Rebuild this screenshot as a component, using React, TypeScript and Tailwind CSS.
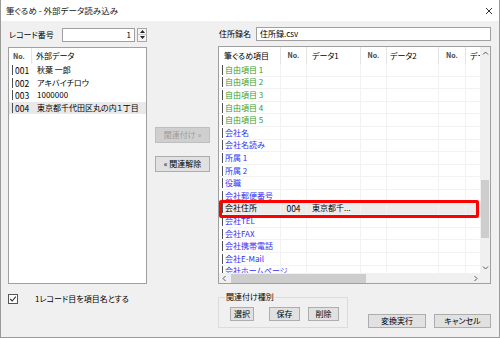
import React from 'react';

type Row = { label: string; c: 'g' | 'b' | 'k'; no?: string; data?: string; hl?: boolean };

const rows: Row[] = [
  { label: '自由項目 1', c: 'g' },
  { label: '自由項目 2', c: 'g' },
  { label: '自由項目 3', c: 'g' },
  { label: '自由項目 4', c: 'g' },
  { label: '自由項目 5', c: 'g' },
  { label: '会社名', c: 'b' },
  { label: '会社名読み', c: 'b' },
  { label: '所属 1', c: 'b' },
  { label: '所属 2', c: 'b' },
  { label: '役職', c: 'b' },
  { label: '会社郵便番号', c: 'b' },
  { label: '会社住所', c: 'k', no: '004', data: '東京都千...', hl: true },
  { label: '会社TEL', c: 'b' },
  { label: '会社FAX', c: 'b' },
  { label: '会社携帯電話', c: 'b' },
  { label: '会社E-Mail', c: 'b' },
  { label: '会社ホームページ', c: 'b' },
];

const colorCls = (c: Row['c']) =>
  c === 'g' ? 'text-[#2f9e2f]' : c === 'b' ? 'text-[#3030f5]' : 'text-black';

const leftRows = [
  { no: '001', v: '秋葉 一郎' },
  { no: '002', v: 'アキバイチロウ' },
  { no: '003', v: '1000000' },
  { no: '004', v: '東京都千代田区丸の内１丁目', sel: true },
];

function Btn({ children, w, h, disabled }: { children: React.ReactNode; w: string; h: string; disabled?: boolean }) {
  return (
    <div
      className={
        'flex items-center justify-center border whitespace-nowrap ' +
        w + ' ' + h + ' ' +
        (disabled ? 'bg-[#cfcfcf] border-[#bfbfbf] text-[#9c9c9c]' : 'bg-[#e1e1e1] border-[#adadad] text-black')
      }
    >
      {children}
    </div>
  );
}

function Chevron({ dir }: { dir: 'up' | 'down' | 'left' | 'right' }) {
  const d =
    dir === 'up' ? 'M1 4.5L3.5 2L6 4.5' :
    dir === 'down' ? 'M1 2.5L3.5 5L6 2.5' :
    dir === 'left' ? 'M4.5 1L2 3.5L4.5 6' : 'M2.5 1L5 3.5L2.5 6';
  return (
    <svg width="7" height="7" viewBox="0 0 7 7">
      <path d={d} stroke="#5a5a5a" strokeWidth="1" fill="none" />
    </svg>
  );
}

export default function App() {
  return (
    <div className="w-[500px] h-[338px] bg-[#f0f0f0] border-x border-b border-[#9a9a9a] flex flex-col text-[8px] leading-none text-black font-['Noto_Sans_CJK_JP','Noto_Sans',sans-serif] [font-feature-settings:'palt'] overflow-hidden">
      {/* title bar */}
      <div className="h-[21px] shrink-0 bg-white flex items-center justify-between pl-[5px] pr-[6px]">
        <span className="text-[#1a1a1a] text-[8.5px]">筆ぐるめ - 外部データ読み込み</span>
        <svg width="8" height="8" viewBox="0 0 8 8">
          <path d="M1 1L7 7M7 1L1 7" stroke="#333" strokeWidth="1" />
        </svg>
      </div>

      {/* body */}
      <div className="flex-1 flex pl-[7px] pt-[6px]">
        {/* left column */}
        <div className="w-[139px] shrink-0 flex flex-col">
          <div className="h-[15px] flex items-center">
            <span className="w-[54px] pl-[1px] shrink-0">レコード番号</span>
            <div className="w-[73px] h-[14px] bg-white border border-[#a0a0a0] flex items-center justify-end pr-[3px]">1</div>
            <div className="ml-[2px] w-[10px] h-[14px] border border-[#a8a8a8] bg-[#f4f4f4] flex flex-col">
              <div className="flex-1 flex items-center justify-center border-b border-[#c8c8c8]">
                <svg width="5" height="3" viewBox="0 0 5 3"><path d="M0 3L2.5 0L5 3Z" fill="#222" /></svg>
              </div>
              <div className="flex-1 flex items-center justify-center">
                <svg width="5" height="3" viewBox="0 0 5 3"><path d="M0 0L2.5 3L5 0Z" fill="#222" /></svg>
              </div>
            </div>
          </div>
          <div className="mt-[5px] h-[237px] bg-white border border-[#a0a0a0] flex flex-col">
            <div className="h-[16px] shrink-0 flex">
              <div className="w-[23px] shrink-0 border-r border-[#e5e5e5] pl-[4px] flex items-center text-[7px] font-bold text-[#444]">No.</div>
              <div className="pl-[4px] flex items-center">外部データ</div>
            </div>
            {leftRows.map((r) => (
              <div key={r.no} className={'h-[12.6px] shrink-0 flex items-center ' + (r.sel ? 'bg-[#e9e9e9]' : '')}>
                <div className="w-[23px] shrink-0 flex items-center">
                  <span className="ml-[3px] w-px h-[10px] bg-[#505050]" />
                  <span className="ml-[2px] text-[8.5px]">{r.no}</span>
                </div>
                <div className="pl-[5px] whitespace-nowrap">{r.v}</div>
              </div>
            ))}
          </div>
          <div className="mt-[10px] h-[10px] flex items-center">
            <div className="w-[10px] h-[10px] border border-[#555] bg-white flex items-center justify-center">
              <svg width="8" height="8" viewBox="0 0 8 8">
                <path d="M1.2 4L3.2 6L6.8 1.6" stroke="#333" strokeWidth="1.1" fill="none" />
              </svg>
            </div>
            <span className="ml-[17px] whitespace-nowrap">1レコード目を項目名とする</span>
          </div>
        </div>

        {/* middle column */}
        <div className="w-[71px] shrink-0 flex flex-col pl-[8px] pt-[100px]">
          <Btn w="w-[55px]" h="h-[16px]" disabled>関連付け »</Btn>
          <div className="mt-[13px]">
            <Btn w="w-[55px]" h="h-[16px]">« 関連解除</Btn>
          </div>
        </div>

        {/* right column */}
        <div className="w-[273px] shrink-0 flex flex-col">
          <div className="h-[14px] flex items-center">
            <span className="w-[38px] pl-[1px] shrink-0">住所録名</span>
            <div className="w-[235px] h-[14px] bg-white border border-[#a0a0a0] flex items-center pl-[3px]">住所録.csv</div>
          </div>
          <div className="mt-[5px] h-[238px] bg-white border border-[#a0a0a0] flex">
            {/* content */}
            <div className="w-[261px] shrink-0 flex flex-col">
              <div className="h-[17px] shrink-0 flex">
                <div className="w-[62px] shrink-0 border-r border-[#e3e3e3] pl-[5px] flex items-center whitespace-nowrap">筆ぐるめ項目</div>
                <div className="w-[26px] shrink-0 border-r border-[#e3e3e3] flex items-center justify-center text-[7px] font-bold text-[#444]">No.</div>
                <div className="w-[54px] shrink-0 border-r border-[#e3e3e3] pl-[5px] flex items-center">データ1</div>
                <div className="w-[26px] shrink-0 border-r border-[#e3e3e3] flex items-center justify-center text-[7px] font-bold text-[#444]">No.</div>
                <div className="w-[52px] shrink-0 border-r border-[#e3e3e3] pl-[3px] flex items-center">データ2</div>
                <div className="w-[27px] shrink-0 border-r border-[#e3e3e3] flex items-center justify-center text-[7px] font-bold text-[#444]">No.</div>
                <div className="w-[14px] shrink-0 pl-[4px] flex items-center overflow-hidden whitespace-nowrap">デー</div>
              </div>
              <div className="flex-1 overflow-hidden flex flex-col">
                {rows.map((r) => (
                  <div key={r.label} className={'relative h-[12.6px] shrink-0 flex ' + (r.hl ? 'bg-[#ececec]' : '')}>
                    <div className="w-[62px] shrink-0 border-r border-b border-[#f2f2f2] flex items-center">
                      <span className="ml-[3px] w-px h-[10px] bg-[#505050] shrink-0" />
                      <span className={'ml-[2px] whitespace-nowrap ' + colorCls(r.c)}>{r.label}</span>
                    </div>
                    <div className="w-[26px] shrink-0 border-r border-b border-[#f2f2f2] flex items-center justify-center text-[8.5px]">{r.no ?? ''}</div>
                    <div className="w-[54px] shrink-0 border-r border-b border-[#f2f2f2] flex items-center pl-[5px] whitespace-nowrap">{r.data ?? ''}</div>
                    <div className="w-[26px] shrink-0 border-r border-b border-[#f2f2f2]" />
                    <div className="w-[52px] shrink-0 border-r border-b border-[#f2f2f2]" />
                    <div className="w-[27px] shrink-0 border-r border-b border-[#f2f2f2]" />
                    <div className="w-[14px] shrink-0 border-b border-[#f2f2f2]" />
                    {r.hl && (
                      <div className="absolute left-0 right-[1px] -top-[2.5px] -bottom-[3px] border-[3px] border-[#ff0000] rounded-[2px] z-10 pointer-events-none" />
                    )}
                  </div>
                ))}
              </div>
              {/* horizontal scrollbar */}
              <div className="h-[10px] shrink-0 bg-[#f0f0f0] flex items-center relative z-20">
                <div className="w-[10px] h-full flex items-center justify-center"><Chevron dir="left" /></div>
                <div className="ml-[2px] w-[135px] h-[9px] bg-[#cdcdcd]" />
                <div className="flex-1" />
                <div className="w-[10px] h-full flex items-center justify-center"><Chevron dir="right" /></div>
              </div>
            </div>
            {/* vertical scrollbar */}
            <div className="w-[10px] shrink-0 bg-[#f0f0f0] flex flex-col">
              <div className="h-[12px] flex items-center justify-center"><Chevron dir="up" /></div>
              <div className="flex-1 flex flex-col">
                <div className="mt-[121px] mx-[1px] h-[58px] bg-[#cdcdcd]" />
              </div>
              <div className="h-[12px] flex items-center justify-center"><Chevron dir="down" /></div>
              <div className="h-[10px]" />
            </div>
          </div>
          {/* bottom */}
          <div className="mt-[13px] flex items-end">
            <div className="relative w-[130px] h-[31px] border border-[#dcdcdc] pt-[9px] pl-[11px] flex">
              <span className="absolute -top-[5px] left-[6px] px-[1px] bg-[#f0f0f0] whitespace-nowrap">関連付け種別</span>
              <Btn w="w-[24px]" h="h-[14px]">選択</Btn>
              <div className="ml-[15px]"><Btn w="w-[31px]" h="h-[14px]">保存</Btn></div>
              <div className="ml-[8px]"><Btn w="w-[31px]" h="h-[14px]">削除</Btn></div>
            </div>
            <div className="ml-[20px]"><Btn w="w-[58px]" h="h-[14px]">変換実行</Btn></div>
            <div className="ml-[8px]"><Btn w="w-[57px]" h="h-[14px]">キャンセル</Btn></div>
          </div>
        </div>
      </div>
    </div>
  );
}
